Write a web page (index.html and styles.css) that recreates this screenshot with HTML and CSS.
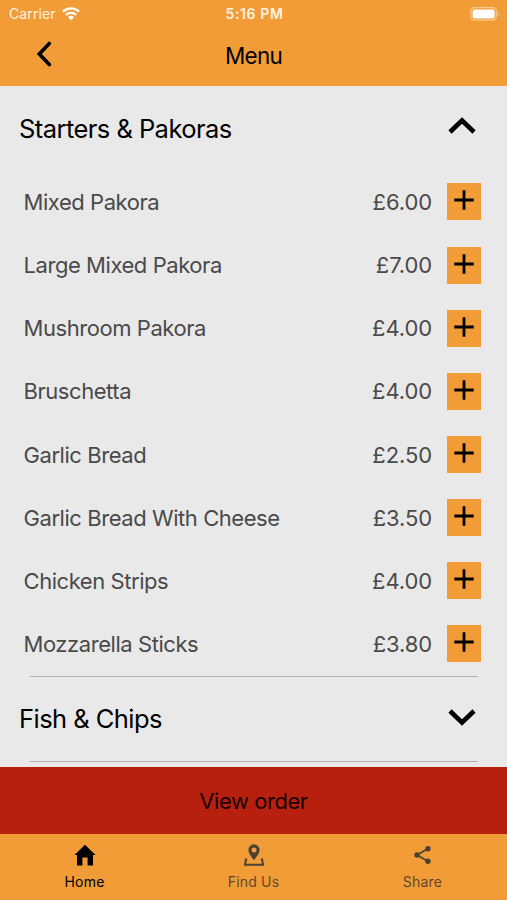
FILE: index.html
```html
<!DOCTYPE html>
<html lang="en">
<head>
    <meta charset="UTF-8">
    <meta name="viewport" content="width=device-width, initial-scale=1.0">
    <title>Menu</title>
    <link rel="stylesheet" href="styles.css">
</head>
<body>

    <!-- Status bar and title -->
    <header class="header">
        <div class="status-bar">
            <div class="carrier">
                <span>Carrier</span>
                <svg width="18" height="14" viewBox="0 0 18 14">
                    <path d="M1 4.600a11.500 11.500 0 0 1 16 0" fill="none" stroke="#fff" stroke-width="2.400"/>
                    <path d="M3.800 8a7.500 7.500 0 0 1 10.400 0" fill="none" stroke="#fff" stroke-width="2.300"/>
                    <path d="M9 13.300l-3-3a4.300 4.300 0 0 1 6 0z" fill="#fff"/>
                </svg>
            </div>
            <span class="time">5:16 PM</span>
            <svg class="battery" width="30" height="14" viewBox="0 0 30 14">
                <rect x="0.9" y="0.7" width="25.4" height="12.4" rx="3.6" fill="none" stroke="#f9c98f" stroke-width="1.3"/>
                <rect x="2.6" y="2.4" width="22" height="9" rx="2" fill="#fff"/>
                <path d="M27.800 4.800q2 2.100 0 4.200z" fill="#f9c98f"/>
            </svg>
        </div>
        <div class="title-bar">
            <svg class="back" width="16" height="26" viewBox="0 0 16 26">
                <path d="M13.300 2.500L3.300 13l10 10.500" fill="none" stroke="#000" stroke-width="3.600" stroke-linecap="round"/>
            </svg>
            <h1>Menu</h1>
        </div>
    </header>

    <main class="menu">
        <section class="category">
            <div class="category-header">
                <h2>Starters &amp; Pakoras</h2>
                <svg width="28" height="18" viewBox="0 0 28 18">
                    <path d="M2 15L14 3.500 26 15" fill="none" stroke="#000" stroke-width="4.600"/>
                </svg>
            </div>
            <ul class="items" id="items"></ul>
        </section>

        <section class="category">
            <div class="category-header">
                <h2>Fish &amp; Chips</h2>
                <svg width="28" height="18" viewBox="0 0 28 18">
                    <path d="M2 3l12 11.500L26 3" fill="none" stroke="#000" stroke-width="4.600"/>
                </svg>
            </div>
        </section>
    </main>

    <button class="view-order">View order</button>

    <nav class="tabs">
        <div class="tab active">
            <svg width="24" height="24" viewBox="0 0 24 24">
                <path d="M12 1.800L22.500 12H20v10.500h-5.400v-8H9.400v8H4V12H1.500z" fill="#000"/>
            </svg>
            <span>Home</span>
        </div>
        <div class="tab">
            <svg width="24" height="24" viewBox="0 0 24 24">
                <path d="M12 17.200C9 13 6.400 9.800 6.400 6.900a5.600 5.600 0 0 1 11.200 0c0 2.900-2.600 6.100-5.600 10.300zM12 9.400a2.500 2.500 0 1 0 0-5 2.500 2.500 0 0 0 0 5z" fill="#494136" fill-rule="evenodd"/>
                <path d="M5.200 16.500H3.800L3 21.700h18l-.8-5.200h-1.400" fill="none" stroke="#494136" stroke-width="1.900"/>
            </svg>
            <span>Find Us</span>
        </div>
        <div class="tab">
            <svg width="24" height="24" viewBox="0 0 24 24">
                <path d="M16.900 5.800L6 12l10.900 6.300" fill="none" stroke="#494136" stroke-width="1.700"/>
                <circle cx="16.900" cy="5.800" r="2.700" fill="#494136"/>
                <circle cx="6" cy="12" r="2.700" fill="#494136"/>
                <circle cx="16.900" cy="18.200" r="2.700" fill="#494136"/>
            </svg>
            <span>Share</span>
        </div>
    </nav>

    <script>
        const items = [
            ['Mixed Pakora', '£6.00'],
            ['Large Mixed Pakora', '£7.00'],
            ['Mushroom Pakora', '£4.00'],
            ['Bruschetta', '£4.00'],
            ['Garlic Bread', '£2.50'],
            ['Garlic Bread With Cheese', '£3.50'],
            ['Chicken Strips', '£4.00'],
            ['Mozzarella Sticks', '£3.80']
        ];

        // Build one row for each item
        document.getElementById('items').innerHTML = items.map(([name, price]) => `
            <li class="item">
                <span class="name">${name}</span>
                <span class="price">${price}</span>
                <button class="add" aria-label="Add">
                    <svg width="20" height="20" viewBox="0 0 20 20">
                        <path d="M10 0.300v19.400M0.300 10h19.400" stroke="#000" stroke-width="2.800"/>
                    </svg>
                </button>
            </li>`).join('');
    </script>

</body>
</html>
```

FILE: styles.css
```css
* {
    box-sizing: border-box;
}
body {
    font-family: Inter, "Liberation Sans", sans-serif;
    background-color: #e9e9e9;
    margin: 0;
    height: 900px;
    display: flex;
    flex-direction: column;
    overflow: hidden;
}
h1, h2 {
    margin: 0;
    font-weight: 400;
    color: #000;
}
button {
    border: none;
    font-family: inherit;
    cursor: pointer;
}
svg {
    display: block;
    flex-shrink: 0;
}
.header {
    height: 86px;
    background-color: #f29c38;
}
.status-bar {
    display: grid;
    grid-template-columns: 1fr auto 1fr;
    align-items: center;
    height: 27px;
    padding: 0 7px 0 9px;
    color: #fff3e0;
    font-size: 14px;
}
.carrier {
    display: flex;
    align-items: center;
    gap: 6px;
    letter-spacing: 0.1px;
}
.time {
    font-size: 14px;
    font-weight: 600;
    letter-spacing: 0.6px;
}
.battery {
    justify-self: end;
}
.title-bar {
    display: grid;
    grid-template-columns: 1fr auto 1fr;
    align-items: center;
    height: 57px;
}
.back {
    margin: 0 0 3px 36px;
}
h1 {
    font-size: 22.5px;
    letter-spacing: -0.8px;
}
.menu {
    height: 681px;
    overflow: hidden;
}
.category-header {
    display: flex;
    align-items: center;
    justify-content: space-between;
    height: 84.4px;
    padding: 0 31px 0 19px;
}
.category-header svg {
    margin-bottom: 4px;
}
h2 {
    font-size: 25.5px;
    letter-spacing: -0.55px;
}
.items {
    list-style: none;
    margin: 0;
    padding: 0;
}
.category::after {
    content: "";
    display: block;
    height: 1px;
    margin: 0 29px 0 30px;
    background-color: #b4b0b0;
}
.item {
    display: flex;
    align-items: center;
    height: 63.15px;
    padding: 0 26px 0 23.5px;
    font-size: 22px;
    color: #4a4a4a;
}
.name {
    flex: 1;
    letter-spacing: -0.44px;
}
.price {
    margin-right: 15px;
    letter-spacing: -0.1px;
}
.add {
    display: flex;
    justify-content: center;
    width: 34px;
    height: 37px;
    padding: 7px 0 0;
    background-color: #f29c38;
}
.view-order {
    height: 67px;
    background-color: #b7200e;
    color: #180000;
    font-size: 22px;
    letter-spacing: -0.45px;
    padding: 0;
}
.tabs {
    display: grid;
    grid-template-columns: repeat(3, 1fr);
    height: 66px;
    background-color: #f29c38;
}
.tab {
    display: flex;
    flex-direction: column;
    align-items: center;
    padding-top: 9px;
    gap: 6px;
    font-size: 14px;
    letter-spacing: 0.2px;
    color: #5f482c;
}
.active {
    color: #000;
}
```
